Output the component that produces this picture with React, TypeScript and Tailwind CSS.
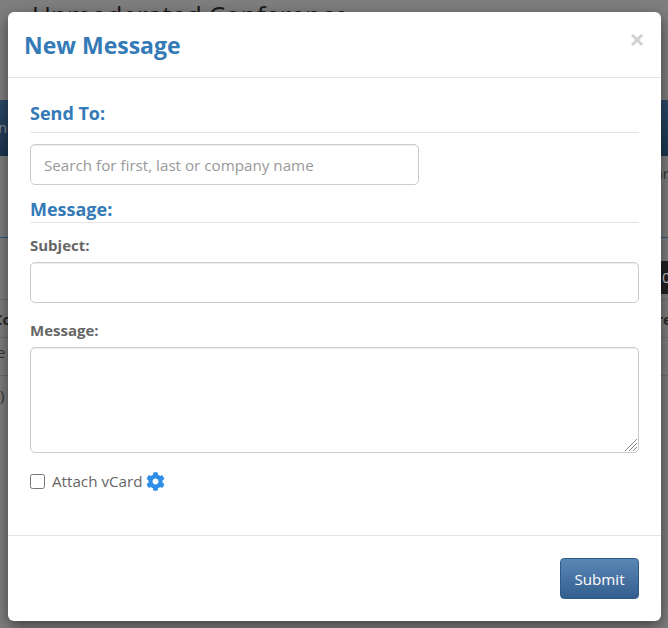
import React from "react";

const font = { fontFamily: '"Open Sans", sans-serif' };

function Gear() {
  return (
    <svg viewBox="0 0 512 512" className="w-[19px] h-[19px] ml-[3px]" fill="#2f8fe8">
      <path d="M487.4 315.7l-42.6-24.6c4.3-23.2 4.3-47 0-70.2l42.6-24.6c4.9-2.8 7.1-8.6 5.5-14-11.1-35.6-30-67.8-54.7-94.6-3.8-4.1-10-5.1-14.8-2.3L380.8 110c-17.9-15.4-38.5-27.3-60.8-35.1V25.8c0-5.6-3.9-10.5-9.4-11.7-36.7-8.2-74.3-7.8-109.2 0-5.5 1.2-9.4 6.1-9.4 11.7V75c-22.2 7.9-42.8 19.8-60.8 35.1L88.7 85.5c-4.9-2.8-11-1.9-14.8 2.3-24.7 26.7-43.6 58.9-54.7 94.6-1.7 5.4.6 11.2 5.5 14L67.3 221c-4.3 23.2-4.3 47 0 70.2l-42.6 24.6c-4.9 2.8-7.1 8.6-5.5 14 11.1 35.6 30 67.8 54.7 94.6 3.8 4.1 10 5.1 14.8 2.3l42.6-24.6c17.9 15.4 38.5 27.3 60.8 35.1v49.2c0 5.6 3.9 10.5 9.4 11.7 36.7 8.2 74.3 7.8 109.2 0 5.5-1.2 9.4-6.1 9.4-11.7v-49.2c22.2-7.9 42.8-19.8 60.8-35.1l42.6 24.6c4.9 2.8 11 1.9 14.8-2.3 24.7-26.7 43.6-58.9 54.7-94.6 1.5-5.5-.7-11.3-5.6-14.1zM256 336c-44.1 0-80-35.9-80-80s35.9-80 80-80 80 35.9 80 80-35.9 80-80 80z" />
    </svg>
  );
}

export default function App() {
  return (
    <div className="relative w-[668px] h-[628px] overflow-hidden bg-[#7f7f7f] text-[#666666]" style={font}>
      <div className="h-[100px] pl-[32px] text-[26px] leading-[30px] text-[#1a1a1a] whitespace-nowrap">Unmoderated Conference</div>
      <div className="h-[56px] bg-gradient-to-b from-[#2c4a6a] to-[#1d3650] flex justify-between px-0 text-[15px] leading-[54px] text-[#8794a3]">
        <span className="-ml-[2px]">n</span>
      </div>
      <div className="h-[81px] flex justify-end pt-[7px] text-[15px] leading-[20px] text-[#333333]">
        <span className="-mr-[1px]">ar</span>
      </div>
      <div className="h-[24px] border-t border-[#2c5a86] flex justify-end">
        <div className="mt-[23px] w-[8px] h-[33px] bg-[#222222] text-[#cccccc] text-[15px] leading-[33px] pl-[2px] overflow-hidden shrink-0">0</div>
      </div>
      <div className="h-[38px]" />
      <div className="h-[38px] border-t border-[#6e6e6e] flex justify-between text-[15px] font-bold leading-[38px] text-[#2a2a2a]">
        <span className="-ml-[7px]">Co</span>
        <span className="-mr-[4px]">re</span>
      </div>
      <div className="h-[38px] border-t border-[#6e6e6e] text-[15px] leading-[29px] text-[#333333] whitespace-nowrap">
        <span className="-ml-[3px]">e (</span>
      </div>
      <div className="border-t border-[#6e6e6e] text-[15px] leading-[38px] text-[#333333]">
        <span>)</span>
      </div>

      <div className="absolute left-[8px] top-[12px] w-[653px] h-[609px] bg-white rounded-[6px] shadow-[0_5px_15px_rgba(0,0,0,0.5)] flex flex-col">
        <div className="h-[66px] border-b border-[#e5e5e5] flex items-start justify-between pl-[16px] pr-[17px]">
          <h4 className="text-[23px] font-bold text-[#337ab7] leading-[30px] mt-[18px]">New Message</h4>
          <span className="text-[24px] font-bold text-[#cfcfcf] leading-[21px] mt-[17px]" style={{ fontFamily: '"Liberation Sans", sans-serif' }}>×</span>
        </div>
        <div className="flex-1 pl-[22px] pr-[22px] pt-[23px]">
          <div className="text-[18px] font-bold text-[#337ab7] leading-[24px] h-[32px] border-b border-[#e5e5e5]">Send To:</div>
          <input
            placeholder="Search for first, last or company name"
            className="block mt-[11px] w-[389px] h-[41px] border border-[#cccccc] rounded-[5px] px-[13px] text-[15.2px] outline-none placeholder:text-[#999999] shadow-[inset_0_1px_1px_rgba(0,0,0,0.075)]"
          />
          <div className="text-[18px] font-bold text-[#337ab7] leading-[22px] mt-[13px] h-[25px] border-b border-[#e5e5e5]">Message:</div>
          <label className="block text-[15px] font-bold leading-[20px] mt-[12px]">Subject:</label>
          <input className="block mt-[7px] w-full h-[41px] border border-[#cccccc] rounded-[5px] outline-none shadow-[inset_0_1px_1px_rgba(0,0,0,0.075)]" />
          <label className="block text-[15px] font-bold leading-[20px] mt-[17px]">Message:</label>
          <div className="relative mt-[7px] h-[106px]">
            <textarea className="block w-full h-full resize-none border border-[#cccccc] rounded-[5px] outline-none shadow-[inset_0_1px_1px_rgba(0,0,0,0.075)]" />
            <svg viewBox="0 0 14 14" className="absolute right-[1px] bottom-[1px] w-[14px] h-[14px]" stroke="#8a8a8a" strokeWidth="1" fill="none">
              <path d="M1 13L13 1M5 13L13 5M9 13L13 9" />
            </svg>
          </div>
          <div className="flex items-center mt-[18px] h-[20px] text-[15.2px]">
            <input type="checkbox" className="w-[15px] h-[15px] m-0" />
            <span className="ml-[7px]">Attach vCard</span>
            <Gear />
          </div>
        </div>
        <div className="h-[86px] border-t border-[#e5e5e5] flex justify-end items-start pr-[22px] pt-[22px]">
          <button className="w-[79px] h-[41px] pt-[1px] rounded-[4px] border border-[#2e5c8a] bg-gradient-to-b from-[#5b87b5] to-[#335f8f] text-white text-[15.2px]">Submit</button>
        </div>
      </div>
    </div>
  );
}
